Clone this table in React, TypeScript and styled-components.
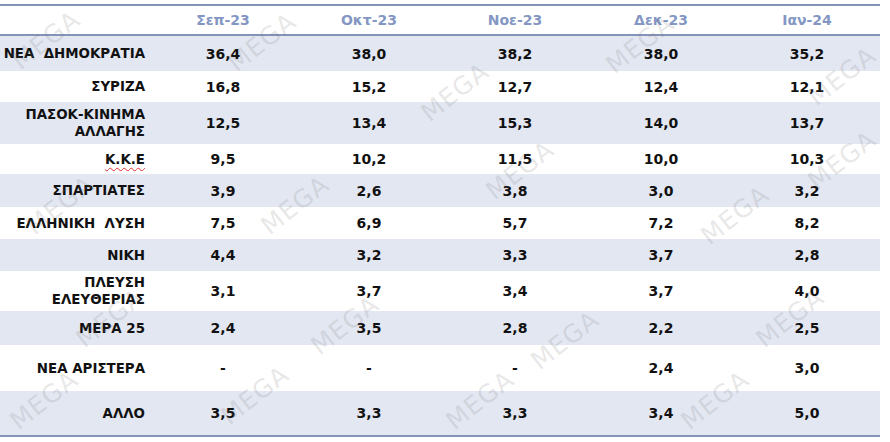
import * as React from "react";
import styled, { createGlobalStyle } from "styled-components";

type Row = {
    label: string[];
    values: string[];
    height: number;
    spell?: boolean;
};

const months = ["Σεπ-23", "Οκτ-23", "Νοε-23", "Δεκ-23", "Ιαν-24"];

const rows: Row[] = [
    { label: ["ΝΕΑ  ΔΗΜΟΚΡΑΤΙΑ"], values: ["36,4", "38,0", "38,2", "38,0", "35,2"], height: 36 },
    { label: ["ΣΥΡΙΖΑ"], values: ["16,8", "15,2", "12,7", "12,4", "12,1"], height: 31 },
    { label: ["ΠΑΣΟΚ-ΚΙΝΗΜΑ", "ΑΛΛΑΓΗΣ"], values: ["12,5", "13,4", "15,3", "14,0", "13,7"], height: 42 },
    { label: ["Κ.Κ.Ε"], values: ["9,5", "10,2", "11,5", "10,0", "10,3"], height: 30, spell: true },
    { label: ["ΣΠΑΡΤΙΑΤΕΣ"], values: ["3,9", "2,6", "3,8", "3,0", "3,2"], height: 33 },
    { label: ["ΕΛΛΗΝΙΚΗ  ΛΥΣΗ"], values: ["7,5", "6,9", "5,7", "7,2", "8,2"], height: 32 },
    { label: ["ΝΙΚΗ"], values: ["4,4", "3,2", "3,3", "3,7", "2,8"], height: 32 },
    { label: ["ΠΛΕΥΣΗ", "ΕΛΕΥΘΕΡΙΑΣ"], values: ["3,1", "3,7", "3,4", "3,7", "4,0"], height: 40 },
    { label: ["ΜΕΡΑ 25"], values: ["2,4", "3,5", "2,8", "2,2", "2,5"], height: 34 },
    { label: ["ΝΕΑ ΑΡΙΣΤΕΡΑ"], values: ["-", "-", "-", "2,4", "3,0"], height: 46 },
    { label: ["ΑΛΛΟ"], values: ["3,5", "3,3", "3,3", "3,4", "5,0"], height: 45 },
];

// watermark spots, centre points over the table
const marks = [
    [46, 40], [262, 42], [455, 92], [640, 44], [842, 76],
    [60, 205], [295, 205], [520, 170], [735, 215], [842, 160],
    [110, 318], [345, 325], [565, 340], [790, 318],
    [44, 400], [255, 395], [480, 400], [715, 400],
];

const GlobalStyle = createGlobalStyle`
    html, body {
        margin: 0;
        padding: 0;
        background: #ffffff;
    }
    body {
        font-family: "DejaVu Sans", "Liberation Sans", sans-serif;
    }
`;

const SPage = styled.div`
    position: relative;
    width: 890px;
    height: 442px;
    overflow: hidden;
    background: #ffffff;
    padding-top: 4px;
    box-sizing: border-box;
`;

const STable = styled.table`
    width: 880px;
    border-collapse: collapse;
    table-layout: fixed;
    border-top: 2px solid #8593b9;
    border-bottom: 2px solid #8593b9;
`;

const SHeadRow = styled.tr`
    height: 30px;
    border-bottom: 2px solid #8593b9;
`;

const SMonth = styled.th`
    padding: 0;
    text-align: center;
    font-size: 14px;
    font-weight: bold;
    color: #8497c4;
`;

const SRow = styled.tr<{ $h: number; $shade: boolean }>`
    height: ${({ $h }) => $h}px;
    background: ${({ $shade }) => ($shade ? "#e3e7f2" : "transparent")};
`;

const SLabel = styled.td`
    padding: 0 5px 0 0;
    text-align: right;
    font-size: 13.4px;
    font-weight: bold;
    line-height: 17px;
    color: #111111;
    white-space: pre;
`;

const SSpell = styled.span`
    text-decoration: underline wavy #e03030;
    text-decoration-thickness: 1px;
    text-underline-offset: 3px;
`;

const SValue = styled.td`
    padding: 0;
    text-align: center;
    font-size: 14px;
    font-weight: bold;
    color: #111111;
`;

const SWatermark = styled.span`
    position: absolute;
    transform: translate(-50%, -50%) rotate(-38deg);
    font-family: "DejaVu Sans", sans-serif;
    font-size: 25px;
    letter-spacing: 1px;
    color: rgba(110, 110, 110, 0.17);
    pointer-events: none;
    white-space: nowrap;
`;

const App: React.FunctionComponent = () => {
    return (
        <>
            <GlobalStyle />
            <SPage>
                <STable>
                    <colgroup>
                        <col style={{ width: 150 }} />
                        {months.map((m) => (
                            <col key={m} style={{ width: 146 }} />
                        ))}
                    </colgroup>
                    <thead>
                        <SHeadRow>
                            <th />
                            {months.map((m) => (
                                <SMonth key={m}>{m}</SMonth>
                            ))}
                        </SHeadRow>
                    </thead>
                    <tbody>
                        {rows.map((row, i) => (
                            <SRow key={row.label.join()} $h={row.height} $shade={i % 2 == 0}>
                                <SLabel>
                                    {row.label.map((line, j) => (
                                        <div key={j}>
                                            {row.spell ? <SSpell>{line}</SSpell> : line}
                                        </div>
                                    ))}
                                </SLabel>
                                {row.values.map((v, k) => (
                                    <SValue key={k}>{v}</SValue>
                                ))}
                            </SRow>
                        ))}
                    </tbody>
                </STable>
                {marks.map(([x, y], i) => (
                    <SWatermark key={i} style={{ left: x, top: y }}>
                        MEGA
                    </SWatermark>
                ))}
            </SPage>
        </>
    );
};

export default App;
